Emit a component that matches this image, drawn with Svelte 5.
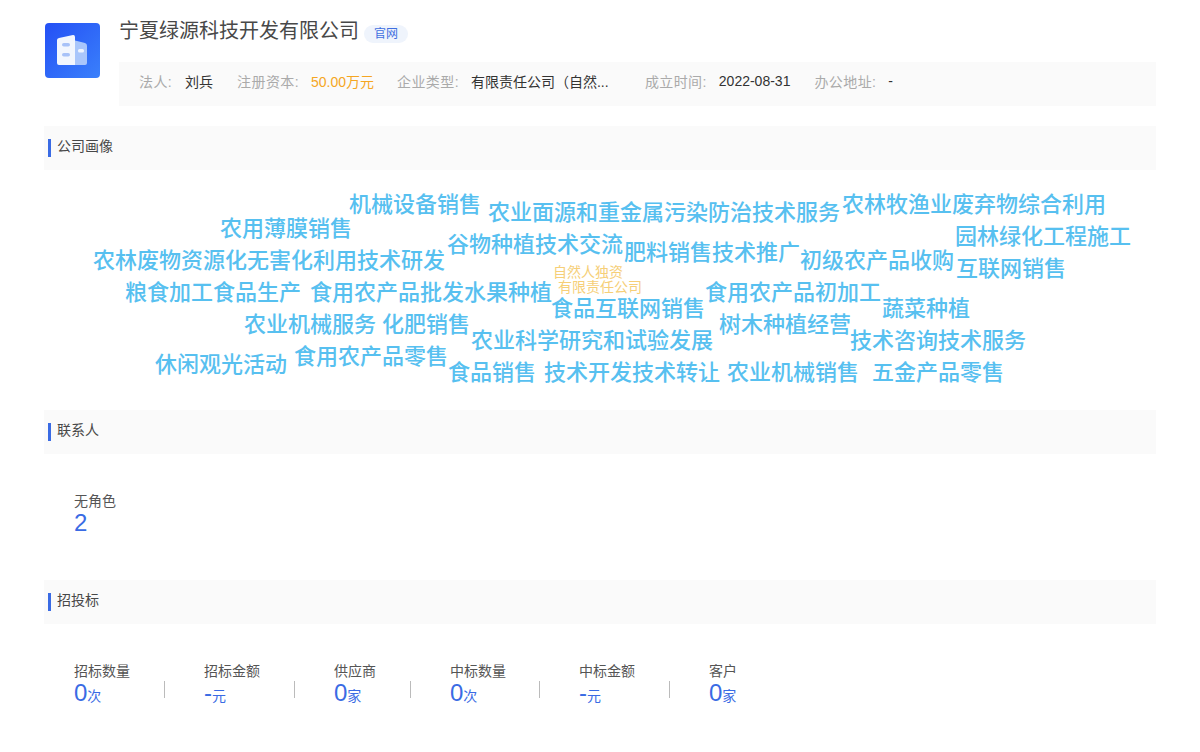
<script>
  const words = [
    ['机械设备销售', 349, 204], ['农业面源和重金属污染防治技术服务', 488, 212], ['农林牧渔业废弃物综合利用', 842, 204],
    ['农用薄膜销售', 220, 228], ['园林绿化工程施工', 955, 236], ['谷物种植技术交流', 447, 244],
    ['肥料销售技术推广', 624, 252], ['农林废物资源化无害化利用技术研发', 93, 260], ['初级农产品收购', 800, 260],
    ['互联网销售', 956, 268], ['粮食加工食品生产', 125, 292], ['食用农产品批发水果种植', 310, 292],
    ['食用农产品初加工', 705, 292], ['食品互联网销售', 551, 308], ['蔬菜种植', 882, 308],
    ['农业机械服务', 244, 324], ['化肥销售', 382, 324], ['树木种植经营', 719, 324],
    ['农业科学研究和试验发展', 471, 340], ['技术咨询技术服务', 850, 340], ['食用农产品零售', 294, 356],
    ['休闲观光活动', 155, 364], ['食品销售', 448, 372], ['技术开发技术转让', 544, 372],
    ['农业机械销售', 727, 372], ['五金产品零售', 872, 372]
  ];
  const small = [['自然人独资', 553, 271], ['有限责任公司', 558, 286]];
  const CLOUD_TOP = 169;
  const info = [
    { label: '法人:', value: '刘兵' },
    { label: '注册资本:', value: '50.00万元', accent: true },
    { label: '企业类型:', value: '有限责任公司（自然...', fixed: true },
    { label: '成立时间:', value: '2022-08-31' },
    { label: '办公地址:', value: '-' }
  ];
  const stats = [
    { label: '招标数量', num: '0', unit: '次' },
    { label: '招标金额', num: '-', unit: '元' },
    { label: '供应商', num: '0', unit: '家' },
    { label: '中标数量', num: '0', unit: '次' },
    { label: '中标金额', num: '-', unit: '元' },
    { label: '客户', num: '0', unit: '家' }
  ];
</script>

<div class="page">
  <header class="head">
    <div class="logo">
      <svg width="55" height="55" viewBox="0 0 55 55">
        <defs>
          <linearGradient id="lg" x1="0" y1="0" x2="1" y2="1">
            <stop offset="0" stop-color="#2450f5" />
            <stop offset="1" stop-color="#3a80fb" />
          </linearGradient>
        </defs>
        <rect width="55" height="55" rx="4" fill="url(#lg)" />
        <path d="M30 17.500 L40 20 Q42 20.500 42 22.500 V40 Q42 42 40 42 H30 Z" fill="#a9c6fb" />
        <path d="M12 17 Q12 15.300 14 15 L28 12 Q30 11.800 30 14 V42 H14 Q12 42 12 40 Z" fill="#f2f6fe" />
        <rect x="17" y="20" width="8" height="3.600" rx="1.800" fill="#a8c2f8" />
        <rect x="17" y="30" width="8" height="3.600" rx="1.800" fill="#a8c2f8" />
        <rect x="33" y="26" width="6" height="3.500" rx="1.500" fill="#eef4fe" />
      </svg>
    </div>
    <div class="main">
      <div class="title-row">
        <h1>宁夏绿源科技开发有限公司</h1>
        <span class="tag">官网</span>
      </div>
      <div class="info">
        {#each info as item}
          <div class="info-item">
            <span class="k">{item.label}</span>
            <span class="v" class:accent={item.accent} class:fixed={item.fixed}>{item.value}</span>
          </div>
        {/each}
      </div>
    </div>
  </header>

  <h2 class="sec">公司画像</h2>
  <div class="cloud">
    {#each words as [t, x, y]}
      <span class="w" style="left:{x - 44}px;top:{y - CLOUD_TOP}px">{t}</span>
    {/each}
    {#each small as [t, x, y]}
      <span class="w s" style="left:{x - 44}px;top:{y - CLOUD_TOP}px">{t}</span>
    {/each}
  </div>

  <h2 class="sec">联系人</h2>
  <div class="role">
    <div class="lbl">无角色</div>
    <div class="num">2</div>
  </div>

  <h2 class="sec">招投标</h2>
  <div class="stats">
    {#each stats as s}
      <div class="stat">
        <div class="lbl">{s.label}</div>
        <div class="num">{s.num}<small>{s.unit}</small></div>
      </div>
    {/each}
  </div>
</div>

<style>
  :global(body) {
    margin: 0;
    background: #fff;
    font-family: "Liberation Sans", "Noto Sans CJK SC", sans-serif;
  }
  .page {
    width: 1112px;
    height: 752px;
    padding: 0 44px;
    overflow: hidden;
  }
  .head {
    display: flex;
    height: 126px;
  }
  .logo {
    width: 55px;
    height: 55px;
    margin: 23px 0 0 1px;
    flex: none;
  }
  .logo svg { display: block; }
  .main {
    flex: 1;
    margin-left: 19px;
    min-width: 0;
  }
  .title-row {
    display: flex;
    align-items: flex-start;
    height: 62px;
    padding-top: 17px;
    box-sizing: border-box;
  }
  h1 {
    margin: 0;
    font-size: 20px;
    line-height: 28px;
    font-weight: 400;
    color: #484848;
  }
  .tag {
    margin: 8px 0 0 5px;
    width: 44px;
    height: 18px;
    border-radius: 9px;
    background: #eff4fc;
    color: #3f6fe0;
    font-size: 12px;
    line-height: 19px;
    text-align: center;
  }
  .info {
    display: flex;
    align-items: center;
    gap: 24px;
    height: 44px;
    padding: 0 0 6px 20px;
    box-sizing: border-box;
    background: #fafafa;
    font-size: 14px;
  }
  .info-item {
    display: flex;
    gap: 12px;
    align-items: center;
  }
  .info-item:first-child { gap: 13px; }
  .info-item:nth-child(2) { margin-right: -1px; }
  .k { color: #aaa; letter-spacing: 0.4px; }
  .v { color: #333; white-space: nowrap; }
  .accent { color: #f5a623; }
  .fixed { width: 150px; }
  .sec {
    position: relative;
    margin: 0;
    height: 44px;
    padding-left: 13px;
    background: #fafafa;
    color: #484848;
    font-size: 14px;
    font-weight: 400;
    line-height: 40px;
  }
  .sec::before {
    content: "";
    position: absolute;
    left: 4px;
    top: 13px;
    width: 3px;
    height: 18px;
    background: #3a6be4;
  }
  .cloud {
    position: relative;
    height: 240px;
  }
  .w {
    position: absolute;
    transform: translateY(-50%);
    font-size: 22px;
    line-height: 30px;
    color: #57c0f0;
    font-weight: 500;
    white-space: nowrap;
  }
  .s {
    font-size: 14px;
    line-height: 16px;
    color: #f6cf78;
    font-weight: 400;
  }
  .role {
    height: 126px;
    padding: 39px 0 0 30px;
    box-sizing: border-box;
  }
  .lbl {
    font-size: 14px;
    line-height: 16px;
    color: #555;
  }
  .num {
    font-size: 24px;
    line-height: 28px;
    color: #3a6be4;
  }
  .num small {
    font-size: 14px;
  }
  .stats {
    display: flex;
    padding: 39px 0 0 30px;
  }
  .stat {
    position: relative;
    min-width: 56px;
    margin-right: 74px;
  }
  .stat::after {
    content: "";
    position: absolute;
    right: -35px;
    top: 18px;
    width: 1px;
    height: 17px;
    background: #bbb;
  }
  .stat:nth-child(3) { min-width: 42px; }
  .stat:nth-child(4) { margin-right: 73px; }
  .stat:nth-child(4)::after { right: -34px; }
  .stat:last-child::after { display: none; }
</style>
